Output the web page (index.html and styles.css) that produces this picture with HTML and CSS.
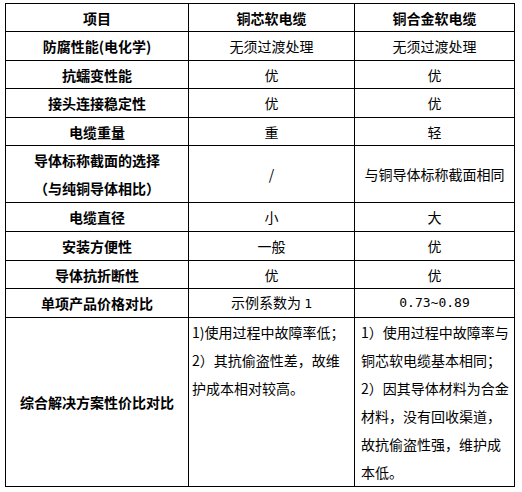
FILE: index.html
```html
<!DOCTYPE html>
<html lang="zh-CN">
<head>
<meta charset="utf-8">
<title>铜芯软电缆与铜合金软电缆对比</title>
<link rel="stylesheet" href="styles.css">
</head>
<body>
<table class="cmp">
  <colgroup>
    <col class="c1">
    <col class="c2">
    <col class="c3">
  </colgroup>
  <tr class="h28">
    <th>项目</th>
    <th>铜芯软电缆</th>
    <th>铜合金软电缆</th>
  </tr>
  <tr class="h29">
    <th>防腐性能(电化学)</th>
    <td>无须过渡处理</td>
    <td>无须过渡处理</td>
  </tr>
  <tr class="h28">
    <th>抗蠕变性能</th>
    <td>优</td>
    <td>优</td>
  </tr>
  <tr class="h29">
    <th>接头连接稳定性</th>
    <td>优</td>
    <td>优</td>
  </tr>
  <tr class="h28">
    <th>电缆重量</th>
    <td>重</td>
    <td>轻</td>
  </tr>
  <tr class="h57">
    <th class="two">导体标称截面的选择<br>（与纯铜导体相比）</th>
    <td>/</td>
    <td>与铜导体标称截面相同</td>
  </tr>
  <tr class="h29">
    <th>电缆直径</th>
    <td>小</td>
    <td>大</td>
  </tr>
  <tr class="h29">
    <th>安装方便性</th>
    <td>一般</td>
    <td>优</td>
  </tr>
  <tr class="h28">
    <th>导体抗折断性</th>
    <td>优</td>
    <td>优</td>
  </tr>
  <tr class="h29">
    <th>单项产品价格对比</th>
    <td>示例系数为 <span class="num">1</span></td>
    <td class="num">0.73~0.89</td>
  </tr>
  <tr class="h169">
    <th>综合解决方案性价比对比</th>
    <td class="para mid">1)使用过程中故障率低；<br>2）其抗偷盗性差，故维<br>护成本相对较高。</td>
    <td class="para right">1）使用过程中故障率与<br>铜芯软电缆基本相同；<br>2）因其导体材料为合金<br>材料，没有回收渠道，<br>故抗偷盗性强，维护成<br>本低。</td>
  </tr>
</table>
</body>
</html>
```
FILE: styles.css
```css
html, body {
  margin: 0;
  padding: 0;
  background: #ffffff;
}

body {
  font-family: "Noto Sans CJK SC", "Noto Sans", sans-serif;
  font-size: 14px;
  color: #000000;
}

.cmp {
  margin: 3px 0 0 5px;
  border-collapse: collapse;
  table-layout: fixed;
  width: 509px;
}

.c1 { width: 183px; }
.c2 { width: 166px; }
.c3 { width: 160px; }

.cmp th,
.cmp td {
  border: 1px solid #000000;
  padding: 0;
  text-align: center;
  vertical-align: middle;
  line-height: 18px;
  white-space: nowrap;
}

.cmp th {
  font-weight: 700;
}

.cmp td {
  font-weight: 400;
}

.num {
  font-family: "DejaVu Sans Mono", "Liberation Mono", monospace;
  font-size: 13px;
}

.h28 { height: 28px; }
.h29 { height: 29px; }
.h57 { height: 57px; }
.h169 { height: 169px; }

.cmp th.two {
  line-height: 28px;
}

.cmp td.para {
  text-align: left;
  vertical-align: top;
  line-height: 28px;
}

.cmp td.mid {
  padding-left: 3px;
}

.cmp td.right {
  padding-left: 6px;
}
```
